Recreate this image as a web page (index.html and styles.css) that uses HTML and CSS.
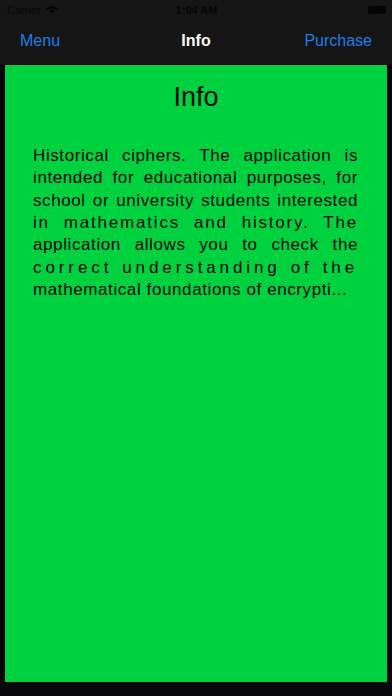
FILE: index.html
```html
<!DOCTYPE html>
<html>
<head>
<meta charset="utf-8">
<link rel="stylesheet" href="styles.css">
</head>
<body>
<div class="screen">
  <div class="status">
    <div class="st-left">
      <span class="carrier">Carrier</span>
      <svg class="wifi" width="14" height="10" viewBox="0 0 14 10"><path d="M1 3.5 Q7 -1.5 13 3.5 L11.5 5 Q7 1.5 2.5 5 Z M4 6 Q7 3.5 10 6 L8.5 7.5 Q7 6.5 5.5 7.5 Z M6.2 8.4 L7 9.5 L7.8 8.4 Q7 7.9 6.2 8.4Z" fill="#050505"/></svg>
    </div>
    <span class="time">1:04 AM</span>
    <div class="battery"><div class="bat-fill"></div></div>
  </div>
  <div class="nav">
    <span class="nav-btn">Menu</span>
    <span class="nav-title">Info</span>
    <span class="nav-btn">Purchase</span>
  </div>
  <div class="card">
    <h1 class="title">Info</h1>
    <div class="body">
      <span class="ln">Historical ciphers. The application is</span>
      <span class="ln">intended for educational purposes, for</span>
      <span class="ln">school or university students interested</span>
      <span class="ln wide1">in mathematics and history. The</span>
      <span class="ln">application allows you to check the</span>
      <span class="ln wide2">correct understanding of the</span>
      <span class="ln last">mathematical foundations of encrypti...</span>
    </div>
  </div>
</div>
</body>
</html>
```
FILE: styles.css
```css
html, body {
  margin: 0;
  padding: 0;
  background: #07070a;
}
.screen {
  width: 392px;
  height: 696px;
  display: flex;
  flex-direction: column;
  font-family: "Liberation Sans", Arial, sans-serif;
  background: #07070a;
  overflow: hidden;
}
.status {
  height: 20px;
  background: #151515;
  display: flex;
  align-items: center;
  justify-content: space-between;
  padding: 0 6px 0 7px;
  font-size: 11px;
  color: #050505;
  font-weight: bold;
}
.st-left {
  display: flex;
  align-items: center;
  gap: 4px;
  width: 90px;
}
.carrier { font-weight: normal; }
.battery {
  width: 90px;
  display: flex;
  justify-content: flex-end;
}
.bat-fill {
  width: 18px;
  height: 8px;
  background: #050505;
  border-radius: 2px;
}
.nav {
  height: 44px;
  background: #151515;
  display: flex;
  align-items: center;
  justify-content: space-between;
  padding: 0 20px 2px 20px;
  box-sizing: border-box;
  font-size: 16px;
}
.nav-btn {
  color: #1e7ee6;
  width: 80px;
}
.nav-btn:last-child { text-align: right; }
.nav-title {
  color: #ffffff;
  font-weight: bold;
  font-size: 16px;
}
.card {
  margin: 1px 5px 0 5px;
  height: 617px;
  background: #00d13f;
  display: flex;
  flex-direction: column;
}
.title {
  margin: 17px 0 0 0;
  font-size: 27px;
  font-weight: normal;
  color: #080808;
  text-align: center;
  line-height: 30px;
}
.body {
  margin: 33px 29px 0 28px;
  font-size: 17px;
  line-height: 22.35px;
  letter-spacing: 0.6px;
  color: #050505;
}
.ln {
  display: block;
  text-align: justify;
  text-align-last: justify;
  white-space: nowrap;
}
.wide1 { letter-spacing: 1.8px; }
.wide2 { letter-spacing: 3.9px; }
.last { text-align-last: left; }
```
